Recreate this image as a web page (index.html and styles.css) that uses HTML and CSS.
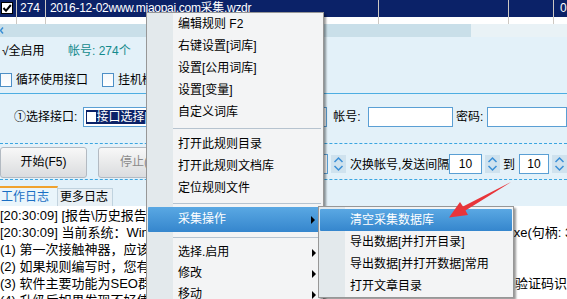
FILE: index.html
```html
<!DOCTYPE html>
<html lang="zh-CN">
<head>
    <meta charset="UTF-8">
    <title>采集神器</title>
    <link rel="stylesheet" href="styles.css">
</head>
<body>
    <div class="grid">
        <div class="grid-row selected">
            <div class="cell check">
                <svg width="12" height="12" viewBox="0 0 12 12"><rect x="0.5" y="0.5" width="11" height="11" fill="#fff" stroke="#000"/><path d="M2.5 6 L5 8.8 L9.8 3" fill="none" stroke="#000" stroke-width="2"/></svg>
            </div>
            <div class="cell num">274</div>
            <div class="cell title">2016-12-02www.miaopai.com采集.wzdr</div>
            <div class="cell w130"></div>
            <div class="cell w45"></div>
            <div class="cell last">0</div>
        </div>
        <div class="grid-row blank">
            <div class="cell check"></div>
            <div class="cell num"></div>
            <div class="cell title"></div>
            <div class="cell w130"></div>
            <div class="cell w45"></div>
            <div class="cell last"></div>
        </div>
    </div>

    <div class="toolbar">
        <div class="tb-left">
            <svg width="6" height="13" viewBox="0 0 6 13"><path d="M3 3.5 L0.5 6.5 L3 9.5" fill="none" stroke="#3a8fd6" stroke-width="1.5"/></svg>
        </div>
        <div class="tb-right"></div>
    </div>

    <div class="panel">
        <div class="row r1">
            <span class="all">√全启用</span>
            <span class="count">帐号: 274个</span>
        </div>
        <div class="row r2">
            <label class="opt first"><span class="cb"></span>循环使用接口</label>
            <label class="opt"><span class="cb"></span>挂机模式运行</label>
        </div>
        <div class="divider"></div>
        <div class="row r3">
            <span class="lbl-iface">①选择接口:</span>
            <div class="select">
                <span class="picked"><span class="sq"></span>接口选择[全部接口]</span>
                <svg class="chev" width="9" height="6" viewBox="0 0 9 6"><path d="M0.8 0.8 L4.5 4.8 L8.2 0.8" fill="none" stroke="#3a8fd6" stroke-width="1.5"/></svg>
            </div>
            <span class="lbl-acc">帐号:</span>
            <div class="input acc"></div>
            <span class="lbl-pwd">密码:</span>
            <div class="input pwd"></div>
        </div>
        <div class="dashed"></div>
        <div class="row r4">
            <div class="btn start">开始(F5)</div>
            <div class="btn stop">停止(F6)</div>
            <span class="lbl-each">每</span>
            <div class="input num each"></div>
            <div class="spin">
                <svg width="11" height="16" viewBox="0 0 11 16"><path d="M1.5 6 L5.5 2 L9.5 6 M1.5 10 L5.5 14 L9.5 10" fill="none" stroke="#3a8fd6" stroke-width="1.5"/></svg>
            </div>
            <span class="lbl-swap">次换帐号,发送间隔</span>
            <div class="input num gap1">10</div>
            <div class="spin">
                <svg width="11" height="16" viewBox="0 0 11 16"><path d="M1.5 6 L5.5 2 L9.5 6 M1.5 10 L5.5 14 L9.5 10" fill="none" stroke="#3a8fd6" stroke-width="1.5"/></svg>
            </div>
            <span class="lbl-to">到</span>
            <div class="input num gap2">10</div>
            <div class="spin">
                <svg width="11" height="16" viewBox="0 0 11 16"><path d="M1.5 6 L5.5 2 L9.5 6 M1.5 10 L5.5 14 L9.5 10" fill="none" stroke="#3a8fd6" stroke-width="1.5"/></svg>
            </div>
        </div>
        <div class="dashed"></div>
    </div>

    <div class="tabs">
        <div class="tab active">工作日志</div>
        <div class="tab">更多日志</div>
    </div>

    <div class="log">
        <div>[20:30:09] [报告\历史报告]已清理</div>
        <div>[20:30:09] 当前系统：Windows 7 64位 进程路径：D:\Program Files\神器\CaiJiShenQi\s.exe(句柄: 3020)</div>
        <div>(1) 第一次接触神器，应该先看看帮助文档</div>
        <div>(2) 如果规则编写时，您有不懂的地方</div>
        <div>(3) 软件主要功能为SEO群发，支持论坛博客等各类网站自动注册发帖回复，内置多种常用验证码识别</div>
        <div>(4) 升级后如果发现不好使，请重新下载</div>
    </div>

    <div class="menu">
        <div class="item">编辑规则 F2</div>
        <div class="item">右键设置[词库]</div>
        <div class="item">设置[公用词库]</div>
        <div class="item">设置[变量]</div>
        <div class="item">自定义词库</div>
        <div class="sep"></div>
        <div class="item">打开此规则目录</div>
        <div class="item">打开此规则文档库</div>
        <div class="item">定位规则文件</div>
        <div class="sep s2"></div>
        <div class="item hot more">采集操作</div>
        <div class="sep s3"></div>
        <div class="item tight more">选择.启用</div>
        <div class="item tight more">修改</div>
        <div class="item tight more">移动</div>
    </div>

    <div class="menu submenu">
        <div class="item hot">清空采集数据库</div>
        <div class="item">导出数据[并打开目录]</div>
        <div class="item">导出数据[并打开数据]常用</div>
        <div class="item">打开文章目录</div>
    </div>

    <svg class="pointer" width="567" height="299" viewBox="0 0 567 299">
        <polygon points="511,182 465.5,210.5 468,215 449,217.5 460,202 463,206.5" fill="#e8353a"/>
    </svg>
</body>
</html>
```

FILE: styles.css
```css
body{
    margin: 0;
    width: 567px;
    height: 299px;
    overflow: hidden;
    position: relative;
    background: #e3f1f9;
    font-family: "Liberation Sans", "Noto Sans CJK SC", sans-serif;
    font-size: 12px;
    color: #000;
}

/* list rows at the top */
.grid-row{
    display: flex;
    height: 17px;
    line-height: 17px;
    white-space: nowrap;
}
.grid-row.selected{
    background: #0b2268;
    color: #fff;
}
.grid-row.blank{
    height: 7px;
    background: #fff;
}
.cell{
    flex: none;
    box-sizing: border-box;
    border-right: 1px solid #cdc8c2;
    padding-left: 3px;
    overflow: hidden;
}
.cell.check{
    width: 17px;
    padding: 2px 0 0 1px;
    line-height: 0;
}
.cell.num{ width: 29px; }
.cell.title{ width: 333px; padding-left: 4px; letter-spacing: -0.3px; }
.cell.w130{ width: 130px; }
.cell.w45{ width: 45px; }
.cell.last{ flex: 1; border-right: 0; padding-left: 6px; }

.toolbar{
    display: flex;
    height: 13px;
}
.tb-left{
    width: 471px;
    background: #c9dfe9;
    line-height: 0;
}
.tb-right{
    flex: 1;
    background: #e9f2f6;
}

/* settings panel */
.row{
    display: flex;
    white-space: nowrap;
}
.r1{
    height: 25px;
    align-items: center;
    padding-left: 2px;
}
.all{ width: 66px; }
.count{ color: #148a8c; }

.r2{
    height: 31px;
    padding-top: 5px;
    box-sizing: border-box;
    line-height: 14px;
}
.opt{
    display: flex;
    align-items: center;
}
.opt.first{ width: 102px; }
.cb{
    width: 10px;
    height: 12px;
    border: 1px solid #4d8fc6;
    background: linear-gradient(#f4f8fb, #fff);
    margin-right: 4px;
}
.divider{
    height: 1px;
    background: #4eaee2;
}

.r3{
    height: 49px;
    padding-top: 13px;
    box-sizing: border-box;
    line-height: 20px;
}
.lbl-iface{
    width: 71px;
    padding-left: 14px;
}
.select{
    width: 253px;
    height: 20px;
    box-sizing: border-box;
    border: 1px solid #5a9fd4;
    background: #fff;
    display: flex;
    align-items: center;
    padding: 0 3px 0 2px;
    overflow: hidden;
}
.picked{
    display: flex;
    align-items: center;
    height: 14px;
    line-height: 14px;
    background: #0b2268;
    color: #fff;
    padding-right: 40px;
}
.sq{
    width: 9px;
    height: 10px;
    background: #fff;
    margin: 0 1px 0 1px;
}
.chev{ margin-left: auto; }
.input{
    height: 20px;
    box-sizing: border-box;
    border: 1px solid #5a9fd4;
    background: #fff;
}
.lbl-acc{ margin-left: 6px; width: 36px; }
.input.acc{ width: 88px; }
.lbl-pwd{ margin-left: 3px; width: 32px; }
.input.pwd{ width: 80px; flex: none; }

.dashed{
    border-top: 1px dashed #3aa5e0;
}

.r4{
    height: 35px;
    padding-top: 3px;
    box-sizing: border-box;
    align-items: flex-start;
}
.btn{
    height: 31px;
    box-sizing: border-box;
    border: 1px solid #b3bac2;
    border-radius: 3px;
    background: linear-gradient(#f8f8f8, #e6e7e8 60%, #dadcdf);
    text-align: center;
    line-height: 29px;
    flex: none;
}
.btn.start{ width: 87px; }
.btn.stop{ width: 90px; margin-left: 11px; color: #8a8a8a; }
.r4 > span, .r4 > .input, .r4 > .spin{
    align-self: center;
    margin-top: 1px;
}
.lbl-each{ margin-left: 90px; }
.input.num{
    text-align: center;
    line-height: 18px;
    flex: none;
}
.input.each{ width: 32px; margin-left: 6px; }
.spin{
    width: 15px;
    height: 18px;
    background: #cfe2ee;
    display: flex;
    align-items: center;
    justify-content: center;
    flex: none;
    margin-left: 3px;
}
.lbl-swap{ margin-left: 4px; width: 99px; }
.input.gap1{ width: 33px; }
.lbl-to{ margin-left: 3px; width: 17px; }
.input.gap2{ width: 30px; }

/* log tabs */
.tabs{
    display: flex;
    margin-top: 6px;
    height: 20px;
}
.tab{
    box-sizing: border-box;
    line-height: 18px;
    padding: 0 2px;
    white-space: nowrap;
}
.tab.active{
    width: 58px;
    border-top: 2px solid #f0a22e;
    border-right: 1px solid #c3d3de;
    color: #1a6fc4;
    background: #eaf5fb;
    padding-left: 1px;
}
.tab:not(.active){
    width: 55px;
    margin-top: 2px;
    height: 18px;
    line-height: 17px;
    border: 1px solid #c0d3df;
    border-bottom: 0;
    border-left: 0;
    background: #e8f0f5;
}

.log{
    background: #fff;
    height: 100px;
    padding-top: 1px;
    font-size: 13px;
    line-height: 17px;
    white-space: nowrap;
    overflow: hidden;
}

/* context menu */
.menu{
    position: absolute;
    left: 146px;
    top: 12px;
    width: 178px;
    box-sizing: border-box;
    border: 1px solid #979797;
    background: linear-gradient(to right, #e3e9ec 26px, #f3f4f5 26px);
    box-shadow: 2px 2px 2px rgba(0, 0, 0, 0.4);
    white-space: nowrap;
}
.item{
    position: relative;
    height: 22px;
    line-height: 22px;
    padding-left: 31px;
}
.item.tight{
    height: 21px;
    line-height: 21px;
}
.item.hot{
    height: 25px;
    line-height: 25px;
    margin: 0 1px;
    padding-left: 30px;
    color: #fff;
    background: linear-gradient(#5aa8e3, #3586cd);
    border-radius: 1px;
}
.item.more::after{
    content: "";
    position: absolute;
    right: 7px;
    top: 50%;
    margin-top: -4px;
    border-left: 4px solid #000;
    border-top: 4px solid transparent;
    border-bottom: 4px solid transparent;
}
.sep{
    height: 1px;
    background: #b6c3cf;
    margin: 5px 2px 4px 26px;
}
.sep.s2{ margin: 4px 2px 3px 26px; }
.sep.s3{ margin: 5px 2px 4px 26px; }

.submenu{
    left: 318px;
    top: 206px;
    width: 196px;
    padding-top: 2px;
}
.submenu .item.hot{
    height: 22px;
    line-height: 22px;
}

.pointer{
    position: absolute;
    left: 0;
    top: 0;
    pointer-events: none;
}
```
